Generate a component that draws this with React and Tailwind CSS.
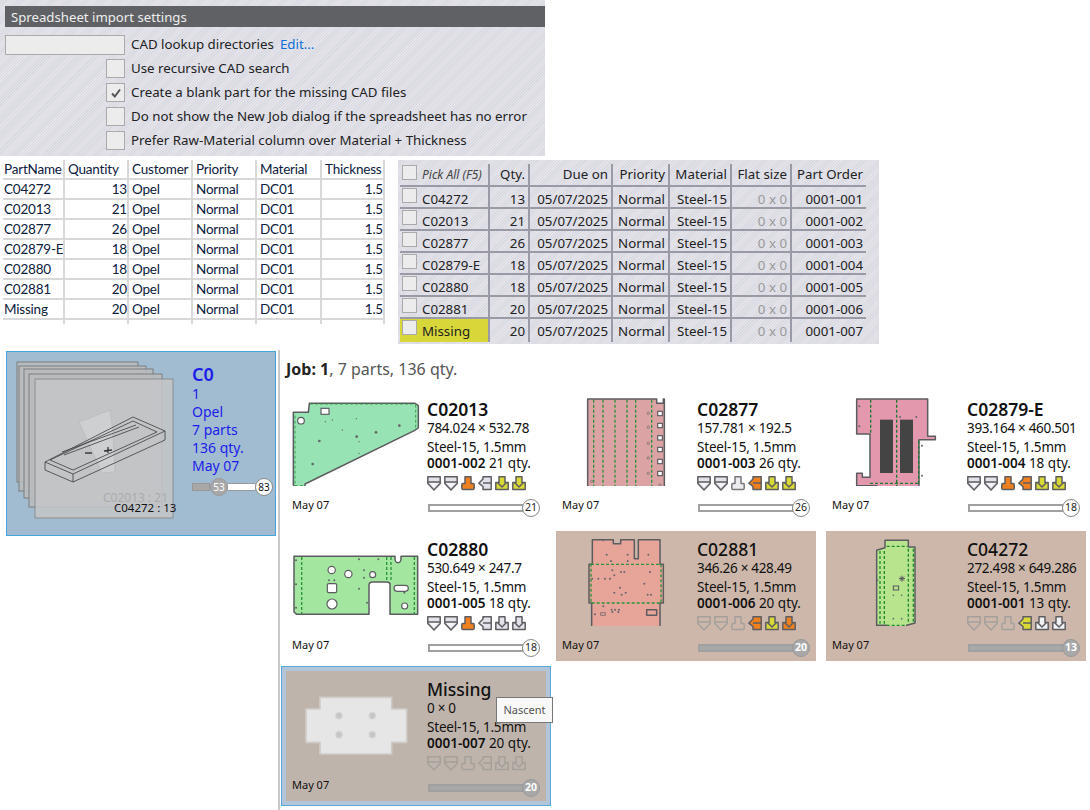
const HATCH = 'bg-[repeating-linear-gradient(135deg,#d9d9e2_0px,#d9d9e2_1px,#e4e4ea_1px,#e4e4ea_2px)]'

const SHEET_ROWS = [
  ['C04272', 13, 1],
  ['C02013', 21, 2],
  ['C02877', 26, 3],
  ['C02879-E', 18, 4],
  ['C02880', 18, 5],
  ['C02881', 20, 6],
  ['Missing', 20, 7],
]

const SETTINGS = [
  ['Use recursive CAD search', false],
  ['Create a blank part for the missing CAD files', true],
  ['Do not show the New Job dialog if the spreadsheet has no error', false],
  ['Prefer Raw-Material column over Material + Thickness', false],
]

const ICON_COLORS = {
  g: ['#e2e2ea', '#5e5e62'],
  l: ['#ececf0', '#77777a'],
  o: ['#ef8020', '#5e5e62'],
  y: ['#dada36', '#5e5e62'],
  w: ['#f2f2f4', '#5e5e62'],
  d: ['none', '#a5a09b'],
}

function BendIcon({ kind, state }) {
  const [fill, stroke] = ICON_COLORS[state]
  const props = { fill, stroke, strokeWidth: 1.5, strokeLinejoin: 'round' }
  return (
    <svg width="14" height="15" viewBox="0 0 14 15">
      {kind === 'shield' && (
        <>
          <path d="M.8.8H13.2V7.6L7 14 .8 7.6Z" {...props} />
          <path d="M.8 6H13.2" {...props} fill="none" />
          <path d="M2.8 7 7 11.5 11.2 7" fill="#fff" stroke="none" opacity={state === 'd' ? 0 : 0.7} />
        </>
      )}
      {kind === 'stem' && <path d="M4 .8H10V7.5H12.5Q13.2 7.5 13.2 9V12Q13.2 13.6 12 13.6H2Q.8 13.6.8 12V9Q.8 7.5 1.5 7.5H4Z" {...props} />}
      {kind === 'left' && (
        <>
          <path d="M.8 7.2 5 3V.8H13.2V13.6H5V10.5Z" {...props} />
          <path d="M5 7H13.2" {...props} fill="none" />
        </>
      )}
      {kind === 'down' && (
        <>
          <path d="M4 .8H10V6.5H13.2V13.6H.8V6.5H4Z" {...props} />
          <path d="M2.5 6.5 7 11 11.5 6.5" {...props} fill="none" />
        </>
      )}
    </svg>
  )
}

function BendIcons({ states }) {
  const kinds = ['shield', 'shield', 'stem', 'left', 'down', 'down']
  return (
    <div className="flex gap-[3px]">
      {kinds.map((k, i) => (
        <BendIcon key={i} kind={k} state={states[i]} />
      ))}
    </div>
  )
}

function Progress({ value, done }) {
  return (
    <div className="flex items-center w-[112px] h-[18px] ml-[1px]">
      <div className={`flex-1 h-[8px] -mr-[2px] border-2 border-[#a0a0a0] ${done ? 'bg-[#a8a8a8]' : 'bg-white'}`} />
      <div
        className={`w-[18px] h-[18px] rounded-full border flex items-center justify-center text-[10.5px] z-10 ${
          done ? 'bg-[#a8a8a8] border-[#999] text-white font-bold' : 'bg-white border-[#888] text-[#222]'
        }`}
      >
        {value}
      </div>
    </div>
  )
}

const DASH = { stroke: '#2a9338', strokeWidth: 4, strokeDasharray: '9 6', fill: 'none' }
const EDGE = { stroke: '#5c5c60', strokeWidth: 4.5, strokeLinejoin: 'round' }
const HOLE = { fill: '#fff', stroke: '#5c5c60', strokeWidth: 3.5 }

function Dots({ items, r = 3 }) {
  return items.map(([x, y], i) => <circle key={i} cx={x} cy={y} r={r} fill="#66666a" />)
}

function Part02013() {
  return (
    <svg width="135" height="95" viewBox="3 21 405 285">
      <path d="M25 85H70L73 58H390L400 65V132L388 140 60 300V309H32L25 303Z" fill="#98e3b3" {...EDGE} />
      <path d="M30 95V305M30 305H60M392 62V135M75 60H390" {...DASH} strokeWidth={2.5} />
      <circle cx="48" cy="110" r="10" {...HOLE} />
      <rect x="108" y="73" width="24" height="18" {...HOLE} />
      <Dots items={[[103, 171], [83, 240], [273, 145], [343, 125], [215, 158]]} r={4} />
      <Dots items={[[121, 113], [142, 108], [172, 138], [214, 104], [222, 173], [222, 208]]} r={2} />
    </svg>
  )
}

function Part02877() {
  return (
    <svg width="135" height="95" viewBox="3 21 405 285">
      <path d="M98 45H305V58H325V45H328V322H98Z" fill="#dca3a5" {...EDGE} />
      <path d="M116 47V320M144 47V320M180 47V320M216 47V320M242 47V320M290 47V320" {...DASH} />
      {[82, 118, 155, 190, 226, 262].map((y) => (
        <rect key={y} x="308" y={y} width="14" height="13" {...HOLE} />
      ))}
      {[[280, 88], [280, 130], [280, 178], [280, 222], [280, 268], [110, 292], [315, 303]].map(([x, y]) => (
        <circle key={y} cx={x} cy={y} r="3.5" fill="none" stroke="#66666a" strokeWidth="2" />
      ))}
    </svg>
  )
}

function Part02879() {
  return (
    <svg width="135" height="95" viewBox="3 21 405 285">
      <path d="M95 45H308V157H331V167H282V322H220L215 305 210 322H170L155 305H95V268H112V280H135V150H95Z" fill="#e398ae" {...EDGE} />
      <rect x="165" y="107" width="39" height="160" fill="#444" />
      <rect x="225" y="107" width="39" height="160" fill="#444" />
      <path d="M137 47V150M215 47V320M135 298H280M281 170V298" {...DASH} stroke="#1f7a30" />
      <Dots items={[[103, 67], [103, 127], [225, 99], [274, 99], [291, 185], [291, 275]]} />
    </svg>
  )
}

function Part02880() {
  return (
    <svg width="135" height="95" viewBox="3 12 405 285">
      <path d="M27 88H330V95A9 12 0 0 0 348 95V88H398V262H315V172Q315 165 305 165H262Q252 165 252 175V262H35L27 255Z" fill="#a2e6a0" {...EDGE} />
      <path d="M50 90V260M305 90V160M318 90V160M388 90V260" {...DASH} />
      <circle cx="140" cy="129" r="11" {...HOLE} />
      <circle cx="190" cy="141" r="11" {...HOLE} />
      <circle cx="263" cy="143" r="9" {...HOLE} />
      <circle cx="141" cy="231" r="15" {...HOLE} />
      <circle cx="359" cy="237" r="9" {...HOLE} />
      <rect x="127" y="170" width="28" height="27" rx="4" {...HOLE} />
      <rect x="327" y="175" width="43" height="18" rx="9" {...HOLE} />
      <Dots items={[[33, 100], [33, 172], [33, 242], [222, 97], [280, 97], [222, 185], [246, 227], [358, 197], [132, 160], [148, 160], [237, 130], [237, 152]]} />
    </svg>
  )
}

function Part02881() {
  return (
    <svg width="135" height="95" viewBox="3 12 405 285">
      <path d="M112 38H175V50H197V38H238V95H250V38H315V112H325V228H315V310H290V300H145V310H110V228H102V112H112Z" fill="#e7a59a" {...EDGE} />
      <rect x="108" y="112" width="210" height="116" {...DASH} />
      <rect x="275" y="248" width="30" height="17" fill="none" {...EDGE} />
      <rect x="137" y="257" width="14" height="8" fill="none" {...EDGE} strokeWidth={2} />
      <Dots items={[[145, 40], [155, 83], [218, 83], [280, 83], [168, 102], [218, 102], [172, 130], [198, 135], [208, 135], [112, 155], [130, 155], [150, 155], [165, 155], [178, 145], [268, 170], [178, 197], [195, 182], [200, 203], [212, 197], [278, 203], [288, 203], [285, 135], [145, 238], [170, 248], [180, 248], [192, 248], [120, 262], [172, 255], [190, 255]]} />
    </svg>
  )
}

function Part04272() {
  return (
    <svg width="135" height="95" viewBox="3 12 405 285">
      <path d="M155 70 180 62V40H250V60H270V288L245 295V312H185V295H155Z" fill="#b8e48e" {...EDGE} />
      <path d="M165 72V290M178 72V290M250 65V290M265 65V285M185 58H248M185 295H245" {...DASH} stroke="#1f8a30" />
      <path d="M222 155H240M231 146V164M225 149 237 161M237 149 225 161" stroke="#55555a" strokeWidth="3" />
      <rect x="205" y="177" width="16" height="12" fill="none" stroke="#55555a" strokeWidth="3" />
      <Dots items={[[205, 205], [230, 205], [205, 275], [230, 275], [158, 160], [268, 238], [213, 40]]} r={2.5} />
    </svg>
  )
}

function PartMissing() {
  return (
    <svg width="135" height="95" viewBox="33 21 405 285">
      <path d="M135 100H350V135H395V235H350V270H135V235H93V135H135Z" fill="#e6e6e6" stroke="#d0ccc8" strokeWidth="5" strokeLinejoin="round" />
      {[[192, 155], [292, 155], [192, 212], [292, 212]].map(([x, y]) => (
        <circle key={`${x}-${y}`} cx={x} cy={y} r="10" fill="#c6c6c6" stroke="#d8d8d8" strokeWidth="5" strokeDasharray="3 2" />
      ))}
    </svg>
  )
}

const CARDS = [
  { name: 'C02013', size: '784.024 × 532.78', order: '0001-002', qty: 21, icons: 'ggogyy', Part: Part02013 },
  { name: 'C02877', size: '157.781 × 192.5', order: '0001-003', qty: 26, icons: 'ggloyy', Part: Part02877 },
  { name: 'C02879-E', size: '393.164 × 460.501', order: '0001-004', qty: 18, icons: 'ggooyy', Part: Part02879 },
  { name: 'C02880', size: '530.649 × 247.7', order: '0001-005', qty: 18, icons: 'ggoggg', Part: Part02880 },
  { name: 'C02881', size: '346.26 × 428.49', order: '0001-006', qty: 20, icons: 'dddoyo', done: true, Part: Part02881 },
  { name: 'C04272', size: '272.498 × 649.286', order: '0001-001', qty: 13, icons: 'dddyww', done: true, Part: Part04272 },
  { name: 'Missing', size: '0 × 0', order: '0001-007', qty: 20, icons: 'dddddd', done: true, selected: true, Part: PartMissing },
]

function PartCard({ name, size, order, qty, icons, done, selected, Part }) {
  const bg = selected ? 'bg-[#bfb4ac] shadow-[0_0_0_4px_#b3c5d8,0_0_0_5px_#5aa7d8]' : done ? 'bg-[#ccb7aa]' : ''
  return (
    <div className={`relative flex w-[260px] h-[130px] text-[#111] ${bg}`}>
      <div className="w-[141px] shrink-0">
        <Part />
        <div className="pl-[6px] mt-[11px] text-[11px] leading-[16px]">May 07</div>
      </div>
      <div className="flex flex-col pt-[7px]">
        <div className={`text-[17.5px] leading-[22px] ${done ? 'font-medium' : 'font-semibold'}`}>{name}</div>
        <div className="text-[13.5px] leading-[18px] tracking-[-0.3px] mt-[-1px] whitespace-nowrap">{size}</div>
        <div className="text-[13.5px] leading-[18px] tracking-[-0.2px] mt-[1px]">Steel-15, 1.5mm</div>
        <div className="text-[13.5px] leading-[18px] whitespace-nowrap -mt-[2px]">
          <span className="font-semibold">{order}</span> {qty} qty.
        </div>
        <div className="mt-[4px]">
          <BendIcons states={icons} />
        </div>
        <div className="mt-[8px]">
          <Progress value={qty} done={done} />
        </div>
      </div>
      {selected && (
        <div className="absolute left-[210px] top-[26px] w-[57px] h-[26px] bg-[#f8f8f8] border border-[#777] flex items-center justify-center text-[11px] text-[#555] z-20">
          Nascent
        </div>
      )}
    </div>
  )
}

function SettingsPanel() {
  return (
    <div className={`w-[545px] h-[156px] pt-[6px] ${HATCH}`}>
      <div className="ml-[5px] h-[21px] pl-[6px] bg-[#606165] text-[#eee] text-[13.2px] leading-[23px]">Spreadsheet import settings</div>
      <div className="flex items-center h-[20px] mt-[8px] ml-[5px] text-[13.3px] text-[#222]">
        <div className="w-[120px] h-[20px] bg-[#ececec] border border-[#aaa]" />
        <span className="ml-[6px]">CAD lookup directories</span>
        <span className="ml-[6px] text-[#0a6fd6]">Edit...</span>
      </div>
      <div className="flex flex-col gap-[5px] mt-[4px] ml-[106px]">
        {SETTINGS.map(([label, checked]) => (
          <div key={label} className="flex items-center h-[19px] text-[13.3px] text-[#222] whitespace-nowrap">
            <div className="w-[19px] h-[19px] bg-[#ececec] border border-[#aaa] flex items-center justify-center">
              {checked && (
                <svg width="12" height="12" viewBox="0 0 12 12">
                  <path d="M2 6.5 4.8 9.5 10 2.5" fill="none" stroke="#555" strokeWidth="2" />
                </svg>
              )}
            </div>
            <span className="ml-[6px]">{label}</span>
          </div>
        ))}
      </div>
    </div>
  )
}

function SpreadsheetTable() {
  const cell = 'border-r-2 border-b-2 border-[#d8d8d8] overflow-hidden whitespace-nowrap'
  const cols = 'grid-cols-[62px_64px_64px_64px_65px_63px]'
  return (
    <div className="w-[382px] font-['Lato',sans-serif] text-[13.5px] tracking-[-0.2px] leading-[18px] text-[#0c2040]">
      <div className={`grid ${cols} auto-rows-[20px]`}>
        {['PartName', 'Quantity', 'Customer', 'Priority', 'Material', 'Thickness'].map((h, i) => (
          <div key={h} className={`${cell} ${i === 0 ? 'pl-[1px]' : 'pl-[3px]'}`}>
            {h}
          </div>
        ))}
        {SHEET_ROWS.map(([name, qty]) => [
          <div key={`${name}a`} className={`${cell} pl-[1px]`}>{name}</div>,
          <div key={`${name}b`} className={`${cell} text-right`}>{qty}</div>,
          <div key={`${name}c`} className={`${cell} pl-[3px]`}>Opel</div>,
          <div key={`${name}d`} className={`${cell} pl-[3px]`}>Normal</div>,
          <div key={`${name}e`} className={`${cell} pl-[3px]`}>DC01</div>,
          <div key={`${name}f`} className={`${cell} text-right`}>1.5</div>,
        ])}
      </div>
      <div className={`grid ${cols} h-[4px]`}>
        {[0, 1, 2, 3, 4, 5].map((i) => (
          <div key={i} className="border-r-2 border-[#d8d8d8]" />
        ))}
      </div>
    </div>
  )
}

function PickTable() {
  const cols = 'grid-cols-[90px_40px_83px_57px_62px_60px_74px]'
  const line = 'border-r-2 border-[#9a9aa6] px-[3px] whitespace-nowrap flex items-center'
  const box = 'w-[15px] h-[15px] mr-[5px] bg-[#ececec] border border-[#aaa] shrink-0 self-start mt-[1px]'
  return (
    <div className={`w-[481px] h-[184px] pt-[4px] pl-[2px] text-[13.3px] text-[#222] ${HATCH}`}>
      <div className={`grid ${cols} h-[23px] border-b-2 border-[#9a9aa6] w-[466px]`}>
        <div className={`${line} italic text-[#444] pl-[2px]`}>
          <span className={box} />
          <span className="text-[12px] pt-[1px]">Pick All (F5)</span>
        </div>
        <div className={`${line} justify-end`}>Qty.</div>
        <div className={`${line} justify-end`}>Due on</div>
        <div className={`${line} justify-end`}>Priority</div>
        <div className={`${line} justify-end`}>Material</div>
        <div className={`${line} justify-end`}>Flat size</div>
        <div className="px-[3px] flex items-center justify-end whitespace-nowrap">Part Order</div>
      </div>
      {SHEET_ROWS.map(([name, qty, n], i) => (
        <div key={name} className={`grid ${cols} h-[22px] w-[466px] ${i < 6 ? 'border-b-2 border-[#9a9aa6]' : ''}`}>
          <div className={`${line} pl-[2px] ${name === 'Missing' ? 'bg-[#d7d73a]' : ''}`}>
            <span className={box} />
            <span className="pt-[3px]">{name}</span>
          </div>
          <div className={`${line} justify-end pt-[3px]`}>{qty}</div>
          <div className={`${line} justify-end pt-[3px]`}>05/07/2025</div>
          <div className={`${line} justify-end pt-[3px]`}>Normal</div>
          <div className={`${line} justify-end pt-[3px]`}>Steel-15</div>
          <div className={`${line} justify-end pt-[3px] text-[#999]`}>0 x 0</div>
          <div className="px-[3px] pt-[3px] flex items-center justify-end whitespace-nowrap">0001-00{n}</div>
        </div>
      ))}
    </div>
  )
}

function JobCard() {
  return (
    <div className="flex w-[270px] h-[185px] bg-[#a1bcd1] border border-[#45a5dc]">
      <svg width="185" height="183" viewBox="7 352 185 183" className="shrink-0">
        {[[17, 362, 121, 120], [19, 366, 127, 125], [24, 369, 129, 129], [29, 374, 133, 133]].map(([x, y, w, h]) => (
          <rect key={x} x={x} y={y} width={w} height={h} fill="#b8bbbe" fillOpacity="0.9" stroke="#7c7c7c" strokeWidth="1" />
        ))}
        <rect x="35" y="379" width="138" height="139" fill="#c4c6c8" fillOpacity="0.85" stroke="#8c8c8c" strokeWidth="1" />
        <path d="M79 422 110 410 113 433 115 472 102 473Z" fill="#cdcfd1" stroke="#b5b5b5" strokeWidth="0.6" />
        <text x="103" y="502" fontSize="12" fill="#acacac">C02013 : 21</text>
        <g fill="none" stroke="#3c3c3c" strokeWidth="0.8">
          <path d="M45 462 133 417 165 431 73 474Z" />
          <path d="M45 462V470L73 482V474M73 482 165 440V431" />
          <path d="M50 460 133 421 157 432 73 470Z" />
          <path d="M62 452 136 425M64 455 139 427" />
          <path d="M85 453H92M104 451 112 450M108 447V453" strokeWidth="1.3" />
        </g>
        <text x="114" y="512" fontSize="11.5" fill="#111">C04272 : 13</text>
      </svg>
      <div className="flex flex-col text-[#1c1ce8] text-[14px] leading-[18px] pt-[11px]">
        <div className="text-[18px] leading-[22px] font-semibold">C0</div>
        <div>1</div>
        <div>Opel</div>
        <div>7 parts</div>
        <div>136 qty.</div>
        <div>May 07</div>
        <div className="flex items-center mt-[3px] w-[81px] h-[18px]">
          <div className="w-[18px] h-[8px] bg-[#a8a8a8] border border-[#999]" />
          <div className="w-[18px] h-[18px] rounded-full bg-[#a8a8a8] border border-[#999] text-white text-[10px] flex items-center justify-center">53</div>
          <div className="w-[27px] h-[8px] bg-white border-y border-[#999]" />
          <div className="w-[18px] h-[18px] rounded-full bg-white border border-[#888] text-[#111] text-[10px] flex items-center justify-center">83</div>
        </div>
      </div>
    </div>
  )
}

export default function App() {
  return (
    <div className="w-[1090px] h-[810px] overflow-hidden bg-white font-['Noto_Sans',sans-serif]">
      <SettingsPanel />
      <div className="flex items-start mt-[4px]">
        <div className="ml-[3px]">
          <SpreadsheetTable />
        </div>
        <div className="ml-[13px]">
          <PickTable />
        </div>
      </div>
      <div className="flex mt-[6px]">
        <div className="w-[280px] h-[460px] shrink-0 pl-[6px] pt-[1px] border-r-2 border-[#c9c9c9]">
          <JobCard />
        </div>
        <div className="pl-[6px] shrink-0">
          <div className="h-[41px] pt-[9px] text-[16px] leading-[20px] text-[#555]">
            <span className="font-bold text-[#222]">Job: 1</span>, 7 parts, 136 qty.
          </div>
          <div className="grid grid-cols-[260px_260px_260px] gap-x-[10px] gap-y-[10px]">
            {CARDS.map((c) => (
              <PartCard key={c.name} {...c} />
            ))}
          </div>
        </div>
      </div>
    </div>
  )
}
